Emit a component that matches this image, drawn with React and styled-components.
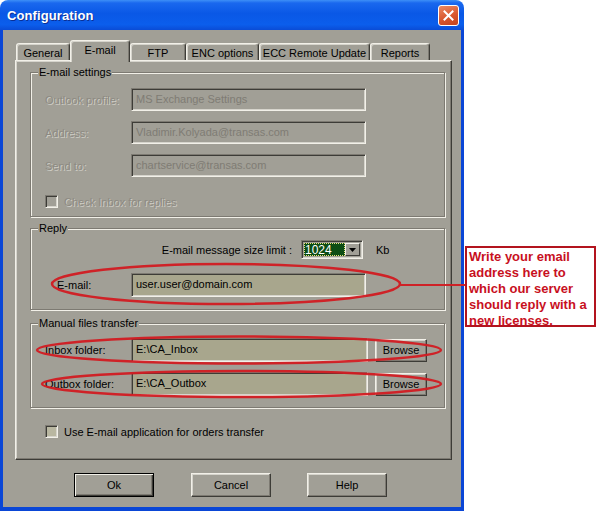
import React from "react";
import styled, { createGlobalStyle, css } from "styled-components";

const GRAY = "#a19f96";
const LIGHT = "#f2f0e8";
const SOFT = "#d6d4cc";
const MID = "#7d7a72";
const DARK = "#3d3c37";

const GlobalStyle = createGlobalStyle`
  html, body { margin: 0; padding: 0; background: #ffffff; }
  body { font-family: "Liberation Sans", Arial, sans-serif; font-size: 11px; color: #000; }
`;

const Page = styled.div`
  position: relative;
  width: 596px;
  height: 511px;
  display: flex;
  overflow: hidden;
`;

const Window = styled.div`
  width: 464px;
  height: 511px;
  display: flex;
  flex-direction: column;
  border-radius: 8px 8px 0 0;
  overflow: hidden;
`;

const TitleBar = styled.div`
  height: 30px;
  flex: none;
  display: flex;
  align-items: center;
  justify-content: space-between;
  padding: 0 5px 0 7px;
  background: linear-gradient(180deg, #3d8ff7 0%, #1a68ee 10%, #0a58e6 45%, #0b5eec 82%, #0a4cd6 100%);
`;

const Title = styled.div`
  color: #fff;
  font-weight: bold;
  font-size: 13px;
  text-shadow: 1px 1px 0 #0a2f95;
  letter-spacing: 0.1px;
`;

const CloseButton = styled.div`
  width: 19px;
  height: 19px;
  border: 1px solid #fff;
  border-radius: 3px;
  background: linear-gradient(160deg, #ec8a63 0%, #d9582f 55%, #c2431f 100%);
  display: flex;
  align-items: center;
  justify-content: center;
`;

const Body = styled.div`
  flex: 1;
  display: flex;
  flex-direction: column;
  background: ${GRAY};
  border-style: solid;
  border-color: #0a46d6;
  border-width: 0 3px 4px 3px;
  padding: 10px 9px 0 12px;
`;

const TabStrip = styled.div`
  height: 20px;
  display: flex;
  align-items: flex-end;
  padding-left: 1px;
  position: relative;
  z-index: 1;
`;

const Tab = styled.div`
  box-sizing: border-box;
  width: ${(p) => p.$w}px;
  height: ${(p) => (p.$active ? 22 : 17)}px;
  margin-bottom: ${(p) => (p.$active ? -2 : 0)}px;
  display: flex;
  align-items: center;
  justify-content: center;
  padding: ${(p) => (p.$active ? "0 0 3px" : "1px 0 0")};
  background: ${GRAY};
  border: 1px solid;
  border-bottom: none;
  border-color: ${LIGHT} ${DARK} transparent ${LIGHT};
  box-shadow: inset -1px 0 0 ${MID}, inset 1px 1px 0 ${SOFT};
  border-radius: 3px 3px 0 0;
  white-space: nowrap;
`;

const Panel = styled.div`
  box-sizing: border-box;
  height: 400px;
  flex: none;
  display: flex;
  flex-direction: column;
  border: 1px solid;
  border-color: ${LIGHT} ${DARK} ${DARK} ${LIGHT};
  box-shadow: inset -1px -1px 0 ${MID}, inset 1px 1px 0 ${SOFT};
  padding: 11px 6px 0 14px;
`;

const Group = styled.div`
  display: flex;
  flex-direction: column;
  margin-top: ${(p) => p.$mt || 0}px;
  padding: 0 14px ${(p) => p.$pb}px;
  border: 1px solid ${MID};
  box-shadow: inset 1px 1px 0 ${LIGHT}, 1px 1px 0 ${LIGHT};
`;

const Legend = styled.div`
  align-self: flex-start;
  margin: -7px 0 0 -7px;
  padding: 0 1px;
  height: 13px;
  line-height: 13px;
  background: ${GRAY};
`;

const Stack = styled.div`
  display: flex;
  flex-direction: column;
  gap: ${(p) => p.$gap}px;
  margin-top: ${(p) => p.$mt}px;
`;

const FieldRow = styled.div`
  display: flex;
  align-items: center;
  height: ${(p) => p.$h || 23}px;
`;

const disabledText = css`
  color: #8d8a82;
  text-shadow: 1px 1px 0 #cfcdc5;
`;

const Label = styled.div`
  width: ${(p) => 86 - (p.$indent || 0)}px;
  padding-left: ${(p) => p.$indent || 0}px;
  flex: none;
  white-space: nowrap;
  ${(p) => p.$disabled && disabledText}
`;

const Field = styled.div`
  box-sizing: border-box;
  width: ${(p) => p.$w}px;
  height: 100%;
  display: flex;
  align-items: center;
  padding: 0 4px 2px;
  background: ${(p) => (p.$disabled ? GRAY : "#a8a68d")};
  border: 1px solid;
  border-color: ${MID} ${LIGHT} ${LIGHT} ${MID};
  box-shadow: inset 1px 1px 0 ${DARK}, inset -1px -1px 0 ${SOFT};
  white-space: nowrap;
  color: ${(p) => (p.$disabled ? "#7f7c74" : "#000")};
`;

const CheckRow = styled.div`
  display: flex;
  align-items: center;
  gap: 6px;
  margin-top: ${(p) => p.$mt}px;
  height: 13px;
  ${(p) => p.$disabled && disabledText}
`;

const CheckBox = styled.div`
  box-sizing: border-box;
  width: 13px;
  height: 13px;
  flex: none;
  background: ${(p) => (p.$disabled ? GRAY : "#b9b7a1")};
  border: 1px solid;
  border-color: ${MID} ${LIGHT} ${LIGHT} ${MID};
  box-shadow: inset 1px 1px 0 ${DARK}, inset -1px -1px 0 ${SOFT};
`;

const SizeRow = styled.div`
  display: flex;
  align-items: center;
  height: 19px;
  margin-top: 5px;
`;

const SizeLabel = styled.div`
  width: 247px;
  text-align: right;
  margin-right: 9px;
  white-space: nowrap;
`;

const Combo = styled.div`
  box-sizing: border-box;
  width: 62px;
  height: 19px;
  display: flex;
  padding: 2px;
  border: 1px solid;
  border-color: ${MID} ${LIGHT} ${LIGHT} ${MID};
  box-shadow: inset 1px 1px 0 ${DARK}, inset -1px -1px 0 ${SOFT};
  background: ${GRAY};
`;

const ComboValue = styled.div`
  flex: 1;
  display: flex;
  align-items: center;
  padding-left: 1px;
  background: #0d4d14;
  color: #fff;
  font-size: 12px;
  outline: 1px dotted #e9e27a;
  outline-offset: -1px;
`;

const DropButton = styled.div`
  box-sizing: border-box;
  width: 15px;
  flex: none;
  display: flex;
  align-items: center;
  justify-content: center;
  background: ${GRAY};
  border: 1px solid;
  border-color: ${LIGHT} ${DARK} ${DARK} ${LIGHT};
`;

const Unit = styled.div`
  margin-left: 13px;
`;

const PushButton = styled.div`
  box-sizing: border-box;
  width: ${(p) => p.$w}px;
  height: ${(p) => p.$h}px;
  flex: none;
  display: flex;
  align-items: center;
  justify-content: center;
  background: ${GRAY};
  border: 1px solid;
  border-color: ${(p) => (p.$default ? "#000" : `${LIGHT} ${DARK} ${DARK} ${LIGHT}`)};
  box-shadow: ${(p) =>
    p.$default
      ? `inset 1px 1px 0 ${LIGHT}, inset -1px -1px 0 ${DARK}, inset -2px -2px 0 ${MID}`
      : `inset -1px -1px 0 ${MID}, inset 1px 1px 0 ${SOFT}`};
  margin-left: ${(p) => p.$ml || 0}px;
`;

const ButtonRow = styled.div`
  display: flex;
  gap: 37px;
  margin: 13px 0 0 59px;
`;

const Overlay = styled.svg`
  position: absolute;
  left: 0;
  top: 0;
  pointer-events: none;
`;

const Callout = styled.div`
  position: absolute;
  left: 465px;
  top: 246px;
  width: 131px;
  height: 81px;
  box-sizing: border-box;
  border: 2px solid #b3141e;
  padding: 1px 2px;
  background: #fff;
  color: #c8101e;
  font-weight: bold;
  font-size: 13px;
  line-height: 16px;
  white-space: nowrap;
`;

const tabs = [
  { label: "General", w: 54 },
  { label: "E-mail", w: 60, active: true },
  { label: "FTP", w: 56 },
  { label: "ENC options", w: 73 },
  { label: "ECC Remote Update", w: 111 },
  { label: "Reports", w: 60 },
];

export default function App() {
  return (
    <>
      <GlobalStyle />
      <Page>
        <Window>
          <TitleBar>
            <Title>Configuration</Title>
            <CloseButton>
              <svg width="13" height="13" viewBox="0 0 13 13">
                <path d="M2.5 2.5 L10.5 10.5 M10.5 2.5 L2.5 10.5" stroke="#fff" strokeWidth="2" strokeLinecap="square" />
              </svg>
            </CloseButton>
          </TitleBar>
          <Body>
            <TabStrip>
              {tabs.map((t) => (
                <Tab key={t.label} $w={t.w} $active={t.active}>
                  {t.label}
                </Tab>
              ))}
            </TabStrip>
            <Panel>
              <Group $pb={8}>
                <Legend>E-mail settings</Legend>
                <Stack $gap={10} $mt={9}>
                  <FieldRow>
                    <Label $disabled>Outlook profile:</Label>
                    <Field $w={235} $disabled>MS Exchange Settings</Field>
                  </FieldRow>
                  <FieldRow>
                    <Label $disabled>Address:</Label>
                    <Field $w={235} $disabled>Vladimir.Kolyada@transas.com</Field>
                  </FieldRow>
                  <FieldRow>
                    <Label $disabled>Send to:</Label>
                    <Field $w={235} $disabled>chartservice@transas.com</Field>
                  </FieldRow>
                </Stack>
                <CheckRow $mt={18} $disabled>
                  <CheckBox $disabled />
                  Check Inbox for replies
                </CheckRow>
              </Group>

              <Group $mt={11} $pb={12}>
                <Legend>Reply</Legend>
                <SizeRow>
                  <SizeLabel>E-mail message size limit :</SizeLabel>
                  <Combo>
                    <ComboValue>1024</ComboValue>
                    <DropButton>
                      <svg width="7" height="4" viewBox="0 0 7 4">
                        <path d="M0 0 H7 L3.5 4 Z" fill="#000" />
                      </svg>
                    </DropButton>
                  </Combo>
                  <Unit>Kb</Unit>
                </SizeRow>
                <Stack $gap={0} $mt={14}>
                  <FieldRow $h={24}>
                    <Label $indent={12}>E-mail:</Label>
                    <Field $w={235}>user.user@domain.com</Field>
                  </FieldRow>
                </Stack>
              </Group>

              <Group $mt={13} $pb={11}>
                <Legend>Manual files transfer</Legend>
                <Stack $gap={10} $mt={8}>
                  <FieldRow $h={24}>
                    <Label>Inbox folder:</Label>
                    <Field $w={237}>E:\CA_Inbox</Field>
                    <PushButton $w={52} $h={23} $ml={7}>Browse</PushButton>
                  </FieldRow>
                  <FieldRow $h={24}>
                    <Label>Outbox folder:</Label>
                    <Field $w={237}>E:\CA_Outbox</Field>
                    <PushButton $w={52} $h={23} $ml={7}>Browse</PushButton>
                  </FieldRow>
                </Stack>
              </Group>

              <CheckRow $mt={17} style={{ paddingLeft: 15 }}>
                <CheckBox />
                Use E-mail application for orders transfer
              </CheckRow>
            </Panel>
            <ButtonRow>
              <PushButton $w={80} $h={24} $default>Ok</PushButton>
              <PushButton $w={80} $h={24}>Cancel</PushButton>
              <PushButton $w={80} $h={24} style={{ marginLeft: -1 }}>Help</PushButton>
            </ButtonRow>
          </Body>
        </Window>

        <Overlay width="596" height="511" viewBox="0 0 596 511">
          <g fill="none" stroke="#d21c22" strokeWidth="2.5" opacity="0.95">
            <ellipse cx="226" cy="284" rx="174" ry="20" />
            <ellipse cx="239" cy="350" rx="202" ry="13.5" />
            <ellipse cx="241.5" cy="384" rx="199.5" ry="13" />
            <line x1="400" y1="285" x2="466" y2="285" strokeWidth="2" />
          </g>
        </Overlay>
        <Callout>
          Write your email
          <br />
          address here to
          <br />
          which our server
          <br />
          should reply with a
          <br />
          new licenses.
        </Callout>
      </Page>
    </>
  );
}
